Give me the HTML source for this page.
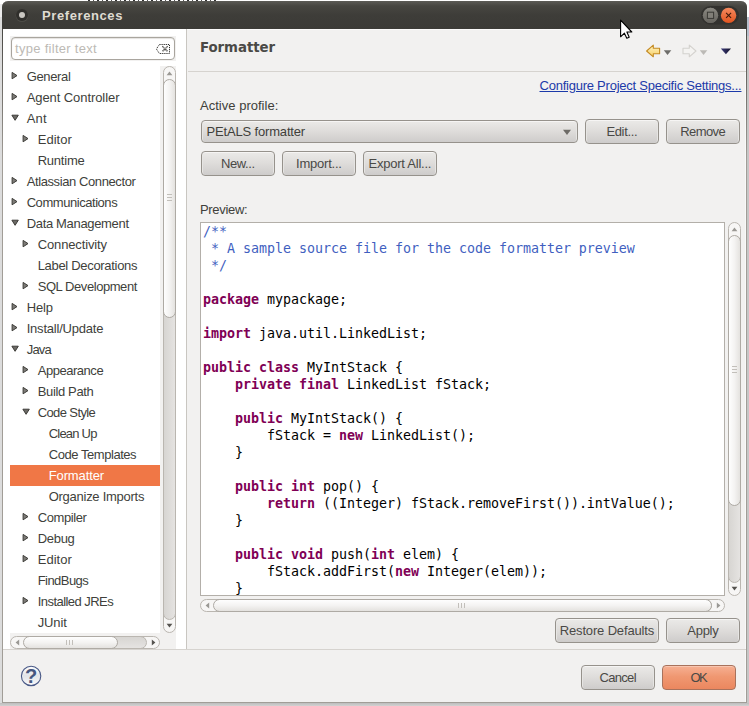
<!DOCTYPE html>
<html><head><meta charset="utf-8"><title>Preferences</title>
<style>
html,body{margin:0;padding:0}
body{width:749px;height:706px;overflow:hidden;position:relative;background:#fff;font-family:"Liberation Sans",sans-serif;font-size:13px;color:#403f3b}
body *{position:absolute;box-sizing:border-box}
.t{white-space:pre;line-height:21px;height:21px}
.sel{background:#f07746}
.btn{border:1px solid #96928c;border-radius:4px;color:#4a4946;background:linear-gradient(#ebeae8,#dedcda 50%,#cecccb);text-align:center;white-space:pre;box-shadow:inset 0 1px 0 #f6f5f4,inset 1px 0 0 #e6e5e3,inset -1px 0 0 #e6e5e3}
.btn span{position:static}
.ok{border-color:#a8725c;background:linear-gradient(#f6b093,#f09872 45%,#eb875f);box-shadow:inset 0 1px 0 #f9c6b0}
.code{font-family:"DejaVu Sans Mono","Liberation Mono",monospace;font-size:13.33px;line-height:17px;color:#000;white-space:pre;letter-spacing:-0.027px}
.code div{left:3px;height:17px}
.code b{position:static;color:#7f0055;font-weight:bold}
.code .c{color:#3f5fbf}
.sbo{border:1px solid #bab6b0;border-radius:7px;background:#f7f6f5}
.sbv{border:1px solid #bab6b0;border-radius:7px;background:linear-gradient(90deg,#d7d5d2,#e5e3e1)}
.sbh{border:1px solid #bab6b0;border-radius:7px;background:linear-gradient(#d7d5d2,#e5e3e1)}
.thv{border:1px solid #aeaaa4;border-radius:7px;background:linear-gradient(90deg,#fefefe,#f4f3f2 50%,#e4e2df)}
.thh{border:1px solid #aeaaa4;border-radius:7px;background:linear-gradient(#fefefe,#f4f3f2 50%,#e4e2df)}
</style></head><body>

<div style="left:0;top:0;width:749px;height:706px;background:#fff"></div>
<div style="left:88px;top:0;width:128px;height:1px;background:repeating-linear-gradient(90deg,#333 0 2px,#fff 2px 5px,#555 5px 6px,#fff 6px 9px)"></div>
<div style="left:0;top:4px;width:3px;height:13px;background:#ececec"></div>
<div style="left:0;top:17px;width:3px;height:689px;background:#dcdcdc"></div>
<div style="left:746px;top:17px;width:3px;height:19px;background:#b6becb"></div>
<div style="left:746px;top:36px;width:3px;height:670px;background:#c6c6c6"></div>
<div style="left:0;top:703px;width:749px;height:3px;background:linear-gradient(#bdbdbd,#d2d2d2)"></div>
<div style="left:2px;top:1px;width:745px;height:702px;background:#f2f1f0;border-radius:6px 6px 0 0;border:1px solid #a19d97;border-top:none"></div>
<div style="left:2px;top:1px;width:745px;height:28px;background:linear-gradient(#5c5b56,#474641 18%,#3e3d39 50%,#3c3b37);border-radius:6px 6px 0 0"></div>
<div class="t" style="left:42px;top:5px;font-size:13px;font-weight:bold;color:#dfdbd2;letter-spacing:0.595px">Preferences</div>
<div style="left:2px;top:29px;width:1px;height:130px;background:linear-gradient(#4a4945,#a19d97)"></div>
<div style="left:746px;top:29px;width:1px;height:130px;background:linear-gradient(#4a4945,#a19d97)"></div>
<div style="left:745px;top:30px;width:1px;height:672px;background:#f9f9f8"></div>
<svg style="left:14px;top:7px" width="16" height="17" viewBox="0 0 16 17"><circle cx="8" cy="8.6" r="6.4" fill="#4d4c47"/><circle cx="8" cy="8" r="6" fill="#302f2c"/><circle cx="8" cy="8" r="3" fill="#c9c6c1"/></svg>
<svg style="left:700px;top:5px" width="40" height="21" viewBox="0 0 40 21"><rect x="1" y="1" width="38" height="18.5" rx="9.2" fill="#33322f"/><circle cx="10.5" cy="10.3" r="7.6" fill="#6f6d67"/><circle cx="10.5" cy="10.3" r="7.6" fill="url(#gm)"/><rect x="7.4" y="7.2" width="6.2" height="6.2" fill="#817f78" stroke="#3a3935" stroke-width="1"/><circle cx="28.6" cy="10.4" r="7.7" fill="url(#gc)"/><path d="M26.1 7.9l5 5M31.1 7.9l-5 5" stroke="#3f1a0b" stroke-width="1.1"/><defs><linearGradient id="gc" x1="0" y1="0" x2="0" y2="1"><stop offset="0" stop-color="#f58a5f"/><stop offset="1" stop-color="#e2541f"/></linearGradient><linearGradient id="gm" x1="0" y1="0" x2="0" y2="1"><stop offset="0" stop-color="#8b8982"/><stop offset="1" stop-color="#66645e"/></linearGradient></defs></svg>
<div style="left:3px;top:29px;width:183px;height:620px;background:#fff"></div>
<div style="left:186px;top:29px;width:1px;height:620px;background:#c9c6c1"></div>
<div style="left:10px;top:36px;width:166px;height:25px;background:#f2f1f0"></div>
<div style="left:11px;top:37px;width:164px;height:23px;background:#fff;border:1px solid #a9a59e;border-radius:4px;box-shadow:inset 0 1px 1px #e4e2df"></div>
<div class="t" style="left:15px;top:38px;color:#bdbab5;letter-spacing:0.293px">type filter text</div>
<svg style="left:155px;top:43px" width="16" height="12" viewBox="0 0 16 12"><path d="M4.4 1.5H14.5V10.5H4.4L1.4 6Z" fill="none" stroke="#2e2d2a" stroke-width="1" stroke-dasharray="1.2 0.9"/><path d="M7.4 3.3l5.2 5.2M12.6 3.3l-5.2 5.2" stroke="#3c3b37" stroke-width="1.3" stroke-dasharray="1.1 0.4"/></svg>
<div class="t" style="left:26.7px;top:66px;letter-spacing:-0.35px">General</div>
<svg style="left:10.5px;top:71px" width="8" height="10" viewBox="0 0 8 10"><path d="M1.1 1.4L6 4.6L1.1 7.8Z" fill="#7d7b77" stroke="#3c3b37" stroke-width="1" stroke-linejoin="round"/></svg>
<div class="t" style="left:26.7px;top:87px;letter-spacing:-0.078px">Agent Controller</div>
<svg style="left:10.5px;top:92px" width="8" height="10" viewBox="0 0 8 10"><path d="M1.1 1.4L6 4.6L1.1 7.8Z" fill="#7d7b77" stroke="#3c3b37" stroke-width="1" stroke-linejoin="round"/></svg>
<div class="t" style="left:26.7px;top:108px;letter-spacing:0.195px">Ant</div>
<svg style="left:10.5px;top:113.5px" width="9" height="8" viewBox="0 0 9 8"><path d="M0.9 1.2H7.3L4.1 6.3Z" fill="#6c6a66" stroke="#3c3b37" stroke-width="1" stroke-linejoin="round"/></svg>
<div class="t" style="left:37.7px;top:129px;letter-spacing:0.022px">Editor</div>
<svg style="left:21.5px;top:134px" width="8" height="10" viewBox="0 0 8 10"><path d="M1.1 1.4L6 4.6L1.1 7.8Z" fill="#7d7b77" stroke="#3c3b37" stroke-width="1" stroke-linejoin="round"/></svg>
<div class="t" style="left:37.7px;top:150px;letter-spacing:-0.232px">Runtime</div>
<div class="t" style="left:26.7px;top:171px;letter-spacing:-0.402px">Atlassian Connector</div>
<svg style="left:10.5px;top:176px" width="8" height="10" viewBox="0 0 8 10"><path d="M1.1 1.4L6 4.6L1.1 7.8Z" fill="#7d7b77" stroke="#3c3b37" stroke-width="1" stroke-linejoin="round"/></svg>
<div class="t" style="left:26.7px;top:192px;letter-spacing:-0.452px">Communications</div>
<svg style="left:10.5px;top:197px" width="8" height="10" viewBox="0 0 8 10"><path d="M1.1 1.4L6 4.6L1.1 7.8Z" fill="#7d7b77" stroke="#3c3b37" stroke-width="1" stroke-linejoin="round"/></svg>
<div class="t" style="left:26.7px;top:213px;letter-spacing:-0.33px">Data Management</div>
<svg style="left:10.5px;top:218.5px" width="9" height="8" viewBox="0 0 9 8"><path d="M0.9 1.2H7.3L4.1 6.3Z" fill="#6c6a66" stroke="#3c3b37" stroke-width="1" stroke-linejoin="round"/></svg>
<div class="t" style="left:37.7px;top:234px;letter-spacing:-0.126px">Connectivity</div>
<svg style="left:21.5px;top:239px" width="8" height="10" viewBox="0 0 8 10"><path d="M1.1 1.4L6 4.6L1.1 7.8Z" fill="#7d7b77" stroke="#3c3b37" stroke-width="1" stroke-linejoin="round"/></svg>
<div class="t" style="left:37.7px;top:255px;letter-spacing:-0.312px">Label Decorations</div>
<div class="t" style="left:37.7px;top:276px;letter-spacing:-0.437px">SQL Development</div>
<svg style="left:21.5px;top:281px" width="8" height="10" viewBox="0 0 8 10"><path d="M1.1 1.4L6 4.6L1.1 7.8Z" fill="#7d7b77" stroke="#3c3b37" stroke-width="1" stroke-linejoin="round"/></svg>
<div class="t" style="left:26.7px;top:297px;letter-spacing:-0.112px">Help</div>
<svg style="left:10.5px;top:302px" width="8" height="10" viewBox="0 0 8 10"><path d="M1.1 1.4L6 4.6L1.1 7.8Z" fill="#7d7b77" stroke="#3c3b37" stroke-width="1" stroke-linejoin="round"/></svg>
<div class="t" style="left:26.7px;top:318px;letter-spacing:-0.214px">Install/Update</div>
<svg style="left:10.5px;top:323px" width="8" height="10" viewBox="0 0 8 10"><path d="M1.1 1.4L6 4.6L1.1 7.8Z" fill="#7d7b77" stroke="#3c3b37" stroke-width="1" stroke-linejoin="round"/></svg>
<div class="t" style="left:26.7px;top:339px;letter-spacing:-0.792px">Java</div>
<svg style="left:10.5px;top:344.5px" width="9" height="8" viewBox="0 0 9 8"><path d="M0.9 1.2H7.3L4.1 6.3Z" fill="#6c6a66" stroke="#3c3b37" stroke-width="1" stroke-linejoin="round"/></svg>
<div class="t" style="left:37.7px;top:360px;letter-spacing:-0.463px">Appearance</div>
<svg style="left:21.5px;top:365px" width="8" height="10" viewBox="0 0 8 10"><path d="M1.1 1.4L6 4.6L1.1 7.8Z" fill="#7d7b77" stroke="#3c3b37" stroke-width="1" stroke-linejoin="round"/></svg>
<div class="t" style="left:37.7px;top:381px;letter-spacing:-0.347px">Build Path</div>
<svg style="left:21.5px;top:386px" width="8" height="10" viewBox="0 0 8 10"><path d="M1.1 1.4L6 4.6L1.1 7.8Z" fill="#7d7b77" stroke="#3c3b37" stroke-width="1" stroke-linejoin="round"/></svg>
<div class="t" style="left:37.7px;top:402px;letter-spacing:-0.609px">Code Style</div>
<svg style="left:21.5px;top:407.5px" width="9" height="8" viewBox="0 0 9 8"><path d="M0.9 1.2H7.3L4.1 6.3Z" fill="#6c6a66" stroke="#3c3b37" stroke-width="1" stroke-linejoin="round"/></svg>
<div class="t" style="left:48.7px;top:423px;letter-spacing:-0.775px">Clean Up</div>
<div class="t" style="left:48.7px;top:444px;letter-spacing:-0.444px">Code Templates</div>
<div class="sel" style="left:10px;top:465px;width:150px;height:21px"></div>
<div class="t" style="left:48.7px;top:465px;letter-spacing:-0.116px;color:#fff">Formatter</div>
<div class="t" style="left:48.7px;top:486px;letter-spacing:-0.263px">Organize Imports</div>
<div class="t" style="left:37.7px;top:507px;letter-spacing:-0.402px">Compiler</div>
<svg style="left:21.5px;top:512px" width="8" height="10" viewBox="0 0 8 10"><path d="M1.1 1.4L6 4.6L1.1 7.8Z" fill="#7d7b77" stroke="#3c3b37" stroke-width="1" stroke-linejoin="round"/></svg>
<div class="t" style="left:37.7px;top:528px;letter-spacing:-0.302px">Debug</div>
<svg style="left:21.5px;top:533px" width="8" height="10" viewBox="0 0 8 10"><path d="M1.1 1.4L6 4.6L1.1 7.8Z" fill="#7d7b77" stroke="#3c3b37" stroke-width="1" stroke-linejoin="round"/></svg>
<div class="t" style="left:37.7px;top:549px;letter-spacing:0.022px">Editor</div>
<svg style="left:21.5px;top:554px" width="8" height="10" viewBox="0 0 8 10"><path d="M1.1 1.4L6 4.6L1.1 7.8Z" fill="#7d7b77" stroke="#3c3b37" stroke-width="1" stroke-linejoin="round"/></svg>
<div class="t" style="left:37.7px;top:570px;letter-spacing:-0.553px">FindBugs</div>
<div class="t" style="left:37.7px;top:591px;letter-spacing:-0.542px">Installed JREs</div>
<svg style="left:21.5px;top:596px" width="8" height="10" viewBox="0 0 8 10"><path d="M1.1 1.4L6 4.6L1.1 7.8Z" fill="#7d7b77" stroke="#3c3b37" stroke-width="1" stroke-linejoin="round"/></svg>
<div class="t" style="left:37.7px;top:612px;letter-spacing:-0.105px">JUnit</div>
<div style="left:160px;top:66px;width:16px;height:583px;background:#f2f1f0"></div>
<div style="left:10px;top:633px;width:150px;height:16px;background:#f2f1f0"></div>
<div class="sbo" style="left:163px;top:66px;width:13px;height:567px"></div>
<div class="sbv" style="left:163px;top:80px;width:13px;height:540px"></div>
<div class="thv" style="left:163px;top:79px;width:13px;height:239px"></div>
<svg style="left:166px;top:71px" width="7" height="5" viewBox="0 0 7 5"><path d="M3.5 0.6L6.4 4.2H0.6Z" fill="#9a9894"/></svg>
<svg style="left:166px;top:623px" width="7" height="5" viewBox="0 0 7 5"><path d="M0.6 0.8H6.4L3.5 4.4Z" fill="#55534f"/></svg>
<svg style="left:167px;top:194px" width="5" height="7" viewBox="0 0 5 7"><path d="M0 0.5H5M0 3.5H5M0 6.5H5" stroke="#c2bfba" stroke-width="1"/></svg>
<div class="sbo" style="left:10px;top:636px;width:150px;height:13px"></div>
<div class="sbh" style="left:24px;top:636px;width:123px;height:13px"></div>
<div class="thh" style="left:23px;top:636px;width:95px;height:13px"></div>
<svg style="left:15px;top:639px" width="5" height="7" viewBox="0 0 5 7"><path d="M4.2 0.6V6.4L0.6 3.5Z" fill="#9a9894"/></svg>
<svg style="left:151px;top:639px" width="5" height="7" viewBox="0 0 5 7"><path d="M0.8 0.6V6.4L4.4 3.5Z" fill="#55534f"/></svg>
<svg style="left:66px;top:640px" width="7" height="5" viewBox="0 0 7 5"><path d="M0.5 0V5M3.5 0V5M6.5 0V5" stroke="#c2bfba" stroke-width="1"/></svg>
<div class="t" style="left:200px;top:37px;font-family:'DejaVu Sans','Liberation Sans',sans-serif;font-size:13.33px;font-weight:bold;color:#4a4946;letter-spacing:-0.059px">Formatter</div>
<svg style="left:644px;top:42px" width="92" height="18" viewBox="0 0 92 18">
<defs><linearGradient id="ya" x1="0" y1="0" x2="0" y2="1"><stop offset="0" stop-color="#fff3c4"/><stop offset="1" stop-color="#f7cf63"/></linearGradient>
<linearGradient id="nv" x1="0" y1="0" x2="1" y2="0"><stop offset="0" stop-color="#3b3a7a"/><stop offset="1" stop-color="#15132b"/></linearGradient></defs>
<path d="M2.6 9L9.3 3.2V6.3H15.6V11.7H9.3V14.8Z" fill="url(#ya)" stroke="#c48a22" stroke-width="1.1" stroke-linejoin="round"/>
<path d="M19.8 8.2H27.3L23.55 13Z" fill="#6e6d6a"/>
<path d="M52 9L45.3 3.2V6.3H39V11.7H45.3V14.8Z" fill="#f4f3f1" stroke="#d4d2ce" stroke-width="1.1" stroke-linejoin="round"/>
<path d="M55.8 8.2H63.3L59.55 13Z" fill="#bcbab6"/>
<path d="M76.8 6.6H87L81.9 12.2Z" fill="url(#nv)"/>
</svg>
<div style="left:187px;top:29px;width:559px;height:1px;background:#fbfbfa"></div>
<div style="left:188px;top:71px;width:558px;height:1px;background:#d6d3cf"></div>
<div class="t" style="left:539.5px;top:75px;color:#1c3aa9;text-decoration:underline;letter-spacing:-0.237px">Configure Project Specific Settings...</div>
<div class="t" style="left:200px;top:95px;letter-spacing:0.017px">Active profile:</div>
<div class="btn" style="left:201px;top:120px;width:377px;height:23px"></div>
<div class="t" style="left:206.5px;top:121px;letter-spacing:-0.166px">PEtALS formatter</div>
<svg style="left:561.5px;top:129.3px" width="10" height="7" viewBox="0 0 10 7"><path d="M1 0.8H9L5 6Z" fill="#6d6b66"/></svg>
<div class="btn " style="left:585px;top:119px;width:74px;height:25px;line-height:23px"><span style="letter-spacing:-0.336px;margin-right:0.336px">Edit...</span></div>
<div class="btn " style="left:666px;top:119px;width:74px;height:25px;line-height:23px"><span style="letter-spacing:-0.587px;margin-right:0.587px">Remove</span></div>
<div class="btn " style="left:201px;top:151px;width:74px;height:25px;line-height:23px"><span style="letter-spacing:-0.421px;margin-right:0.421px">New...</span></div>
<div class="btn " style="left:282px;top:151px;width:74px;height:25px;line-height:23px"><span style="letter-spacing:-0.232px;margin-right:0.232px">Import...</span></div>
<div class="btn " style="left:363px;top:151px;width:74px;height:25px;line-height:23px"><span style="letter-spacing:-0.242px;margin-right:0.242px">Export All...</span></div>
<div class="t" style="left:200px;top:199px;letter-spacing:-0.32px">Preview:</div>
<div style="left:200px;top:222px;width:525px;height:374px;background:#fff;border:1px solid #b3afa9;overflow:hidden"><div class="code" style="left:0;top:0;width:523px;height:372px">
<div class="c" style="left:2px;top:-0.5px">/**</div>
<div class="c" style="left:2px;top:16.5px"> * A sample source file for the code formatter preview</div>
<div class="c" style="left:2px;top:33.5px"> */</div>
<div class="" style="left:2px;top:67.5px"><b>package</b> mypackage;</div>
<div class="" style="left:2px;top:101.5px"><b>import</b> java.util.LinkedList;</div>
<div class="" style="left:2px;top:135.5px"><b>public</b> <b>class</b> MyIntStack {</div>
<div class="" style="left:2px;top:152.5px">    <b>private</b> <b>final</b> LinkedList fStack;</div>
<div class="" style="left:2px;top:186.5px">    <b>public</b> MyIntStack() {</div>
<div class="" style="left:2px;top:203.5px">        fStack = <b>new</b> LinkedList();</div>
<div class="" style="left:2px;top:220.5px">    }</div>
<div class="" style="left:2px;top:254.5px">    <b>public</b> <b>int</b> pop() {</div>
<div class="" style="left:2px;top:271.5px">        <b>return</b> ((Integer) fStack.removeFirst()).intValue();</div>
<div class="" style="left:2px;top:288.5px">    }</div>
<div class="" style="left:2px;top:322.5px">    <b>public</b> <b>void</b> push(<b>int</b> elem) {</div>
<div class="" style="left:2px;top:339.5px">        fStack.addFirst(<b>new</b> Integer(elem));</div>
<div class="" style="left:2px;top:356.5px">    }</div>
</div></div>
<div class="sbo" style="left:728px;top:222px;width:13px;height:374px"></div>
<div class="sbv" style="left:728px;top:236px;width:13px;height:347px"></div>
<div class="thv" style="left:728px;top:235px;width:13px;height:271px"></div>
<svg style="left:731px;top:227px" width="7" height="5" viewBox="0 0 7 5"><path d="M3.5 0.6L6.4 4.2H0.6Z" fill="#9a9894"/></svg>
<svg style="left:731px;top:586px" width="7" height="5" viewBox="0 0 7 5"><path d="M0.6 0.8H6.4L3.5 4.4Z" fill="#55534f"/></svg>
<svg style="left:732px;top:366px" width="5" height="7" viewBox="0 0 5 7"><path d="M0 0.5H5M0 3.5H5M0 6.5H5" stroke="#c2bfba" stroke-width="1"/></svg>
<div class="sbo" style="left:200px;top:599px;width:525px;height:13px"></div>
<div class="sbh" style="left:214px;top:599px;width:498px;height:13px"></div>
<div class="thh" style="left:213px;top:599px;width:499px;height:13px"></div>
<svg style="left:205px;top:602px" width="5" height="7" viewBox="0 0 5 7"><path d="M4.2 0.6V6.4L0.6 3.5Z" fill="#9a9894"/></svg>
<svg style="left:716px;top:602px" width="5" height="7" viewBox="0 0 5 7"><path d="M0.8 0.6V6.4L4.4 3.5Z" fill="#9a9894"/></svg>
<svg style="left:458px;top:603px" width="7" height="5" viewBox="0 0 7 5"><path d="M0.5 0V5M3.5 0V5M6.5 0V5" stroke="#c2bfba" stroke-width="1"/></svg>
<div class="btn " style="left:555px;top:618px;width:104px;height:25px;line-height:23px"><span style="letter-spacing:-0.158px;margin-right:0.158px">Restore Defaults</span></div>
<div class="btn " style="left:666px;top:618px;width:74px;height:25px;line-height:23px"><span style="letter-spacing:-0.306px;margin-right:0.306px">Apply</span></div>
<div style="left:3px;top:649px;width:743px;height:1px;background:#d6d3cf"></div>
<svg style="left:20px;top:665px" width="23" height="23" viewBox="0 0 23 23"><defs><linearGradient id="hg" x1="0" y1="0" x2="0" y2="1"><stop offset="0" stop-color="#ffffff"/><stop offset="0.5" stop-color="#e2e4e8"/><stop offset="1" stop-color="#fafafb"/></linearGradient></defs><circle cx="11.1" cy="10.9" r="9.7" fill="url(#hg)" stroke="#485886" stroke-width="1.1"/><text x="11.2" y="17.6" text-anchor="middle" font-family="Liberation Sans, sans-serif" font-weight="bold" font-size="20" fill="#46567f">?</text></svg>
<div class="btn " style="left:581px;top:665px;width:74px;height:25px;line-height:23px"><span style="letter-spacing:-0.678px;margin-right:0.678px">Cancel</span></div>
<div class="btn ok" style="left:662px;top:665px;width:74px;height:25px;line-height:23px"><span style="letter-spacing:-1.648px;margin-right:1.648px">OK</span></div>
<svg style="left:617px;top:16px" width="20" height="26" viewBox="0 0 20 26"><path d="M3.6 4.2V20.8L7.4 17.2L9.8 22.2L12.2 21.2L9.9 16H14.8Z" fill="#fff" stroke="#000" stroke-width="1.1" stroke-linejoin="round"/></svg>
</body></html>
